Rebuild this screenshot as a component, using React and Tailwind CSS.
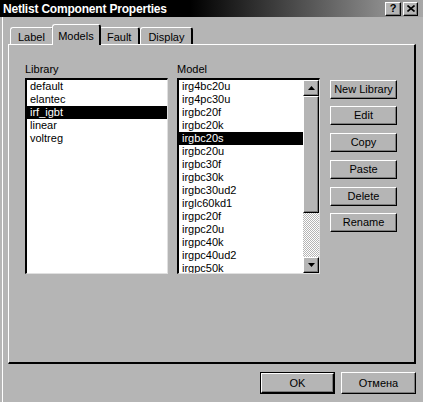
const libraries = ['default', 'elantec', 'irf_igbt', 'linear', 'voltreg'];

const models = [
  'irg4bc20u',
  'irg4pc30u',
  'irgbc20f',
  'irgbc20k',
  'irgbc20s',
  'irgbc20u',
  'irgbc30f',
  'irgbc30k',
  'irgbc30ud2',
  'irglc60kd1',
  'irgpc20f',
  'irgpc20u',
  'irgpc40k',
  'irgpc40ud2',
  'irgpc50k',
];

const sideButtons = [
  { label: 'New Library', mt: 'mt-0' },
  { label: 'Edit', mt: 'mt-[7px]' },
  { label: 'Copy', mt: 'mt-[8px]' },
  { label: 'Paste', mt: 'mt-[8px]' },
  { label: 'Delete', mt: 'mt-[8px]' },
  { label: 'Rename', mt: 'mt-[7px]' },
];

function RaisedButton({ children, className = '' }) {
  return (
    <div
      className={`flex items-center justify-center bg-[#b5b5b5] border-t border-l border-white border-r border-b border-r-black border-b-black shadow-[inset_-1px_-1px_0_#7b7b7b] ${className}`}
    >
      {children}
    </div>
  );
}

function Tab({ label, active }) {
  if (active) {
    return (
      <div className="relative z-10 -mx-[2px] h-[21px] -mb-[1px] w-[49px] flex items-start justify-center pt-[3px] bg-[#b5b5b5] border-t border-l border-white border-r-2 border-r-black rounded-t-[3px]">
        {label}
      </div>
    );
  }
  return (
    <div className="h-[17px] flex items-start justify-center pt-[1px] px-[7px] border-t border-l border-white border-r-2 border-r-black rounded-t-[3px]">
      {label}
    </div>
  );
}

function ListItem({ text, selected }) {
  return (
    <div
      className={`h-[13px] leading-[13px] pl-[3px] whitespace-nowrap ${selected ? 'bg-black text-white' : 'text-black'}`}
    >
      {text}
    </div>
  );
}

function Arrow({ up }) {
  return (
    <svg width="7" height="4" viewBox="0 0 7 4">
      {up ? <path d="M3.5 0 L7 4 L0 4 Z" fill="#000" /> : <path d="M0 0 L7 0 L3.5 4 Z" fill="#000" />}
    </svg>
  );
}

export default function App() {
  return (
    <div className="w-[423px] h-[402px] bg-[#b5b5b5] flex flex-col overflow-hidden font-['Liberation_Sans',Arial,sans-serif] text-[11px] text-black">
      {/* title bar */}
      <div className="h-[17px] flex items-center justify-between pl-[3px] pr-[5px] bg-[linear-gradient(to_right,#000_0%,#000_45%,#a8a8a8_100%)]">
        <span className="text-white font-bold text-[12px] tracking-[-0.2px]">Netlist Component Properties</span>
        <div className="flex gap-[2px]">
          <RaisedButton className="w-[16px] h-[14px] font-bold text-[11px] leading-none">?</RaisedButton>
          <RaisedButton className="w-[15px] h-[14px]">
            <svg width="8" height="7" viewBox="0 0 8 7">
              <path d="M0.5 0.5 L7.5 6.5 M7.5 0.5 L0.5 6.5" stroke="#000" strokeWidth="1.6" />
            </svg>
          </RaisedButton>
        </div>
      </div>

      <div className="flex-1 ml-[2px] border-l border-white pl-[5px] pr-[7px] pt-[7px] flex flex-col">
        {/* tabs */}
        <div className="h-[20px] flex items-end pl-[2px]">
          <Tab label="Label" />
          <Tab label="Models" active />
          <Tab label="Fault" />
          <Tab label="Display" />
        </div>

        {/* panel */}
        <div className="h-[320px] border-t border-l border-white border-r-2 border-b-2 border-r-black border-b-black flex pl-[16px] pt-[17px]">
          <div className="w-[143px] flex flex-col">
            <div className="h-[14px] leading-[14px] mb-[2px]">Library</div>
            <div className="h-[196px] bg-white border-t-2 border-l-2 border-black border-r border-b border-r-[#e0e0e0] border-b-[#e0e0e0] overflow-hidden">
              {libraries.map((l) => (
                <ListItem key={l} text={l} selected={l === 'irf_igbt'} />
              ))}
            </div>
          </div>

          <div className="w-[143px] ml-[9px] flex flex-col">
            <div className="h-[14px] leading-[14px] mb-[2px]">Model</div>
            <div className="h-[196px] bg-white border-t-2 border-l-2 border-black border-r border-b border-r-[#e0e0e0] border-b-[#e0e0e0] flex overflow-hidden">
              <div className="flex-1 overflow-hidden">
                {models.map((m) => (
                  <ListItem key={m} text={m} selected={m === 'irgbc20s'} />
                ))}
              </div>
              <div className="w-[16px] flex flex-col">
                <RaisedButton className="h-[16px] w-[16px]">
                  <Arrow up />
                </RaisedButton>
                <RaisedButton className="h-[117px] w-[16px]" />
                <div className="flex-1 bg-[repeating-conic-gradient(#ffffff_0_25%,#b5b5b5_0_50%)] bg-[length:2px_2px]" />
                <RaisedButton className="h-[16px] w-[16px]">
                  <Arrow />
                </RaisedButton>
              </div>
            </div>
          </div>

          <div className="ml-[10px] pt-[18px] flex flex-col">
            {sideButtons.map((b) => (
              <RaisedButton key={b.label} className={`w-[67px] h-[19px] ${b.mt}`}>
                {b.label}
              </RaisedButton>
            ))}
          </div>
        </div>

        {/* bottom buttons */}
        <div className="flex justify-end gap-[6px] mt-[8px]">
          <div className="border border-black">
            <RaisedButton className="w-[73px] h-[20px]">OK</RaisedButton>
          </div>
          <RaisedButton className="w-[75px] h-[22px]">Отмена</RaisedButton>
        </div>
      </div>
    </div>
  );
}
